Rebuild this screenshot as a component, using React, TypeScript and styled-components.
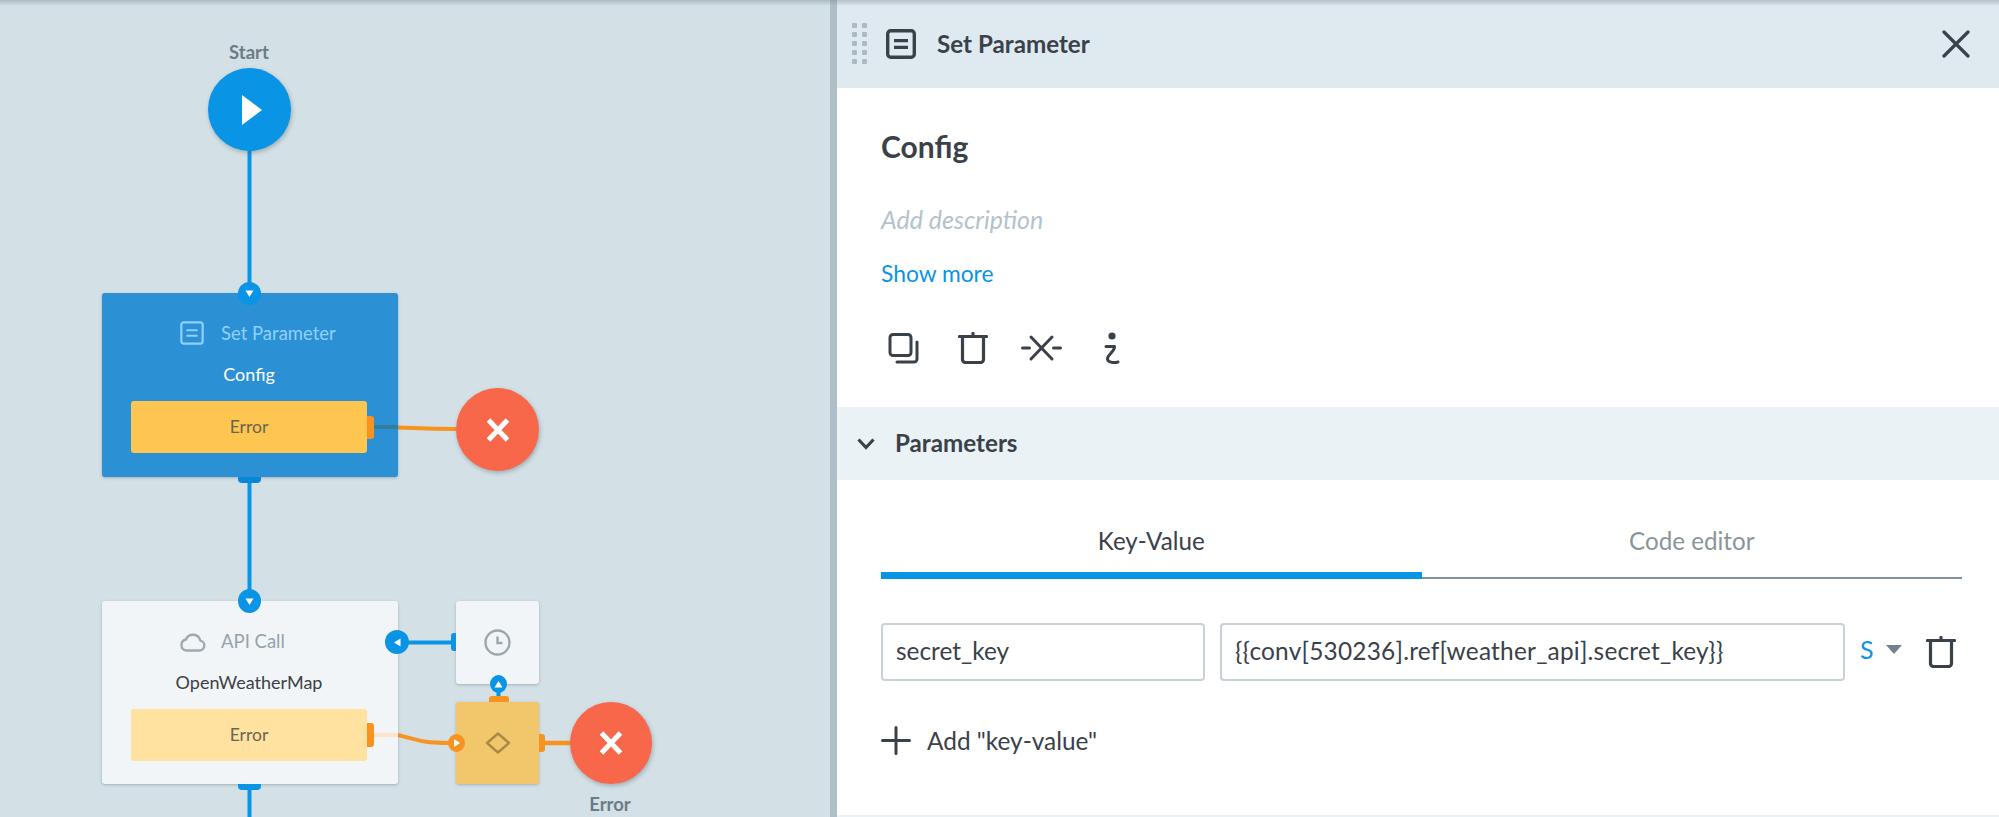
import React from "react";
import styled, { createGlobalStyle } from "styled-components";

const Global = createGlobalStyle`
  html, body { margin: 0; padding: 0; width: 1999px; height: 817px; overflow: hidden; background: #d3e0e6; }
  #root { width: 1999px; height: 817px; }
  * { box-sizing: border-box; }
`;

const FONT = `"Lato", "Open Sans", "Liberation Sans", sans-serif`;

const Page = styled.div`
  position: relative;
  display: flex;
  width: 1999px;
  height: 817px;
  font-family: ${FONT};
  overflow: hidden;
  &::after {
    content: "";
    position: absolute;
    left: 0;
    right: 0;
    top: 0;
    height: 6px;
    background: linear-gradient(rgba(120, 135, 145, 0.42), rgba(120, 135, 145, 0));
    pointer-events: none;
  }
`;

/* ---------- canvas ---------- */
const Canvas = styled.div`
  position: relative;
  flex: 0 0 830px;
  background: #d3e0e6;
`;
const Wires = styled.svg`
  position: absolute;
  left: 0;
  top: 0;
`;
const WiresOver = styled(Wires)`
  z-index: 1;
`;
const Place = styled.div<{ $x: number; $y: number; $w: number; $h: number }>`
  position: absolute;
  left: ${(p) => p.$x}px;
  top: ${(p) => p.$y}px;
  width: ${(p) => p.$w}px;
  height: ${(p) => p.$h}px;
`;
const Circle = styled(Place)<{ $bg: string }>`
  border-radius: 50%;
  background: ${(p) => p.$bg};
  box-shadow: 1px 2px 4px rgba(60, 80, 90, 0.35);
  display: flex;
  align-items: center;
  justify-content: center;
  z-index: 2;
`;
const PlayGlyph = styled.svg`
  margin-left: 5px;
`;
const Port = styled(Place)<{ $bg: string }>`
  border-radius: 50%;
  background: ${(p) => p.$bg};
  display: flex;
  align-items: center;
  justify-content: center;
  z-index: 2;
`;
const Tab = styled(Place)<{ $bg: string; $r: string }>`
  background: ${(p) => p.$bg};
  border-radius: ${(p) => p.$r};
  z-index: 2;
`;
const CanvasLabel = styled.div<{ $cx: number; $cy: number }>`
  position: absolute;
  left: ${(p) => p.$cx - 60}px;
  top: ${(p) => p.$cy - 12}px;
  width: 120px;
  height: 24px;
  line-height: 24px;
  text-align: center;
  font-size: 18.5px;
  font-weight: 700;
  color: #6b7c85;
`;
const Node = styled(Place)<{ $bg: string }>`
  background: ${(p) => p.$bg};
  border-radius: 3px;
  box-shadow: 0 1px 3px rgba(70, 90, 100, 0.35);
  padding: 27px 31px 0 29px;
  display: flex;
  flex-direction: column;
  align-items: stretch;
`;
const NodeHead = styled.div<{ $color: string }>`
  display: flex;
  align-items: center;
  gap: 14px;
  height: 26px;
  padding-left: 46px;
  font-size: 18.5px;
  color: ${(p) => p.$color};
`;
const HeadIcon = styled.div`
  width: 30px;
  display: flex;
  justify-content: center;
`;
const NodeName = styled.div<{ $color: string }>`
  margin-top: 15px;
  height: 26px;
  line-height: 26px;
  text-align: center;
  font-size: 18px;
  color: ${(p) => p.$color};
`;
const ErrorBar = styled.div<{ $bg: string }>`
  margin-top: 14px;
  height: 52px;
  border-radius: 3px;
  background: ${(p) => p.$bg};
  display: flex;
  align-items: center;
  justify-content: center;
  padding-bottom: 2px;
  font-size: 17.5px;
  color: #6a6452;
`;
const SmallBox = styled(Place)<{ $bg: string }>`
  background: ${(p) => p.$bg};
  border-radius: 3px;
  box-shadow: 0 1px 3px rgba(70, 90, 100, 0.35);
  display: flex;
  align-items: center;
  justify-content: center;
`;

/* ---------- divider ---------- */
const Divider = styled.div`
  flex: 0 0 7px;
  background: #aebfc8;
`;

/* ---------- panel ---------- */
const Panel = styled.div`
  flex: 1;
  display: flex;
  flex-direction: column;
  background: #fff;
  color: #3a4149;
`;
const Header = styled.div`
  height: 88px;
  flex: none;
  background: #dfe9f0;
  display: flex;
  align-items: center;
  padding: 0 29px 0 15px;
`;
const Grip = styled.div`
  display: grid;
  grid-template-columns: 5px 5px;
  grid-auto-rows: 5px;
  column-gap: 5px;
  row-gap: 4px;
  margin-top: -1px;
  margin-right: 19px;
  i {
    background: #adbac2;
    border-radius: 1px;
  }
`;
const HeaderTitle = styled.div`
  margin-left: 21px;
  margin-top: -2px;
  font-size: 24.2px;
  font-weight: 700;
  flex: 1;
`;
const Body = styled.div`
  flex: none;
  height: 319px;
  padding: 37px 44px 0;
  display: flex;
  flex-direction: column;
`;
const Name = styled.div`
  height: 42px;
  line-height: 42px;
  font-size: 30px;
  font-weight: 700;
`;
const Desc = styled.div`
  margin-top: 37px;
  height: 30px;
  line-height: 30px;
  font-size: 25px;
  font-style: italic;
  color: #b4c2ca;
`;
const More = styled.div`
  margin-top: 24px;
  height: 30px;
  line-height: 30px;
  font-size: 22.8px;
  color: #0a94e5;
`;
const Actions = styled.div`
  margin-top: 42px;
  display: flex;
  align-items: center;
  height: 36px;
  padding-left: 7px;
`;
const ActionSlot = styled.div<{ $w: number }>`
  width: ${(p) => p.$w}px;
  display: flex;
`;
const SectionHead = styled.div`
  height: 73px;
  flex: none;
  background: #ebf2f6;
  display: flex;
  align-items: center;
  padding-left: 20px;
  gap: 20px;
  font-size: 24.2px;
  font-weight: 700;
`;
const ParamsLabel = styled.span`
  margin-top: -3px;
`;
const Section = styled.div`
  flex: 1;
  padding: 37px 37px 0 44px;
  border-bottom: 2px solid #ebf2f6;
`;
const Tabs = styled.div`
  display: flex;
  height: 62px;
  border-bottom: 2px solid #7f919b;
`;
const TabItem = styled.div<{ $active?: boolean }>`
  flex: 1;
  height: 62px;
  padding-bottom: 9px;
  display: flex;
  align-items: center;
  justify-content: center;
  font-size: 24.2px;
  color: ${(p) => (p.$active ? "#3a4149" : "#8a9499")};
  border-bottom: ${(p) => (p.$active ? "7px solid #0a94e5" : "none")};
`;
const InactiveLabel = styled.span`
  margin-top: -6px;
`;
const Row = styled.div`
  margin-top: 44px;
  display: flex;
  align-items: center;
`;
const Field = styled.div<{ $w: number; $spread?: boolean }>`
  flex: 0 0 ${(p) => p.$w}px;
  height: 58px;
  border: 2px solid #c7d1d6;
  border-radius: 4px;
  display: flex;
  align-items: center;
  padding: 0 0 3px 13px;
  font-size: 24.4px;
  letter-spacing: ${(p) => (p.$spread ? "0.23px" : "0")};
  color: #3a4149;
  margin-right: 15px;
  white-space: nowrap;
`;
const TypeS = styled.div`
  font-size: 25px;
  color: #0a94e5;
  width: 26px;
  margin-top: -7px;
`;
const Caret = styled.div`
  width: 0;
  height: 0;
  border-left: 8px solid transparent;
  border-right: 8px solid transparent;
  border-top: 9px solid #6f828d;
  margin-top: -6px;
  margin-right: 24px;
`;
const AddRow = styled.div`
  margin-top: 45px;
  display: flex;
  align-items: center;
  gap: 16px;
  font-size: 24.4px;
`;

const Dots = ({ n }: { n: number }) => (
  <>{Array.from({ length: n }, (_, i) => <i key={i} />)}</>
);

const Sheet = ({ size = 30, color = "#3a4149", sw = 3.4 }: { size?: number; color?: string; sw?: number }) => (
  <svg width={size} height={size} viewBox="0 0 30 30" fill="none" stroke={color} strokeWidth={sw}>
    <rect x="1.7" y="1.7" width="26.6" height="26.6" rx="3" />
    <path d="M8 11.6h14M8 18.4h14" strokeWidth={sw * 0.9} />
  </svg>
);

const Trash = () => (
  <svg width="30" height="32" viewBox="0 0 30 32" fill="none" stroke="#3a4149" strokeWidth="3.2" strokeLinecap="round">
    <path d="M1.5 4.5h27M15 1.500v3M4.500 4.500v23a3 3 0 0 0 3 3h15a3 3 0 0 0 3-3v-23" />
  </svg>
);

const Copy = () => (
  <svg width="31" height="31" viewBox="0 0 31 31" fill="none" stroke="#3a4149" strokeWidth="3">
    <rect x="2" y="1.5" width="21" height="21" rx="3" />
    <path d="M29 9v17a3 3 0 0 1-3 3H9" strokeLinecap="round" />
  </svg>
);

const Disconnect = () => (
  <svg width="41" height="28" viewBox="0 0 41 28" fill="none" stroke="#3a4149" strokeWidth="3" strokeLinecap="round">
    <path d="M1.5 14h7M32.500 14h7M10 3l21 22M31 3L10 25" />
  </svg>
);

const Info = () => (
  <svg width="16" height="33" viewBox="0 0 16 33" fill="none" stroke="#3a4149" strokeWidth="3" strokeLinecap="round" strokeLinejoin="round">
    <circle cx="8" cy="4" r="3.600" fill="#3a4149" stroke="none" />
    <path d="M2 14.500h8.500c.8 4-6.500 8-7 12-.4 3.500 6 5 10.500 3.500" />
  </svg>
);

const Close = () => (
  <svg width="28" height="28" viewBox="0 0 28 28" fill="none" stroke="#3a4149" strokeWidth="3.2" strokeLinecap="round">
    <path d="M2 2l24 24M26 2L2 26" />
  </svg>
);

const Chevron = () => (
  <svg width="18" height="12" viewBox="0 0 18 12" fill="none" stroke="#3a4149" strokeWidth="3.2">
    <path d="M1.500 1.500L9 9.500l7.500-8" />
  </svg>
);

const Plus = () => (
  <svg width="30" height="29" viewBox="0 0 30 29" fill="none" stroke="#3a4149" strokeWidth="3" strokeLinecap="round">
    <path d="M15 1.500v26M1.500 14.500h27" />
  </svg>
);

const Cloud = () => (
  <svg width="27" height="21" viewBox="0 0 27 21" fill="none" stroke="#9fabb3" strokeWidth="2.400">
    <path d="M7 19.500h13.500a5 5 0 0 0 .8-9.900A7.500 7.500 0 0 0 7 8.500a5.600 5.600 0 0 0 0 11z" strokeLinejoin="round" />
  </svg>
);

const Clock = () => (
  <svg width="27" height="27" viewBox="0 0 27 27" fill="none" stroke="#9aa7af" strokeWidth="2.400">
    <circle cx="13.500" cy="13.500" r="12" />
    <path d="M13.500 7.500v6.500h5" />
  </svg>
);

const Diamond = () => (
  <svg width="26" height="22" viewBox="0 0 26 22" fill="none" stroke="#a98a45" strokeWidth="2.400">
    <path d="M13 1.500L24 11 13 20.500 2 11z" strokeLinejoin="round" />
  </svg>
);

const Cross = () => (
  <svg width="24" height="24" viewBox="0 0 24 24" fill="none" stroke="#fff" strokeWidth="5">
    <path d="M2.500 2l19 20M21.500 2l-19 20" />
  </svg>
);

const Tri = ({ rot = 0, color = "#fff" }: { rot?: number; color?: string }) => (
  <svg width="9" height="9" viewBox="0 0 9 9" fill={color} transform={`rotate(${rot})`}>
    <path d="M0.500 1.500h8L4.500 8z" />
  </svg>
);

export default function App() {
  return (
    <Page>
      <Global />
      <Canvas>
        <Wires width="830" height="817" viewBox="0 0 830 817" fill="none">
          <path d="M249.500 151V293M249.500 477V601M249.500 784V817M397 642.500H456M498.500 675V700" stroke="#0a94e5" strokeWidth="4" />
          <path d="M398 427.500C425 428.500 430 429 456 429" stroke="#f7931e" strokeWidth="4" />
          <path d="M398 735C420 741 425 743 450 743" stroke="#f7931e" strokeWidth="4" />
          <path d="M545 743H570" stroke="#f7931e" strokeWidth="4.500" />
        </Wires>

        <CanvasLabel $cx={249} $cy={52}>Start</CanvasLabel>
        <Circle $x={208} $y={68} $w={83} $h={83} $bg="#0a94e5">
          <PlayGlyph width="22" height="30" viewBox="0 0 22 30" fill="#fff"><path d="M1 0l20 15L1 30z" /></PlayGlyph>
        </Circle>

        <Node $x={102} $y={293} $w={296} $h={184} $bg="#2b90d4">
          <NodeHead $color="#8fd0fb">
            <HeadIcon><Sheet size={24} color="#8fd0fb" sw={2.800} /></HeadIcon>
            <span>Set Parameter</span>
          </NodeHead>
          <NodeName $color="#fff">Config</NodeName>
          <ErrorBar $bg="#fec550">Error</ErrorBar>
        </Node>
        <Port $x={238} $y={282} $w={23} $h={23} $bg="#0a94e5"><Tri /></Port>
        <Tab $x={367} $y={416} $w={7} $h={23} $bg="#f7931e" $r="0 3px 3px 0" />
        <Tab $x={238} $y={477} $w={23} $h={6} $bg="#0a85d8" $r="0 0 4px 4px" />
        <Circle $x={456} $y={388} $w={83} $h={83} $bg="#f9674a"><Cross /></Circle>

        <Node $x={102} $y={601} $w={296} $h={183} $bg="#f2f5f7">
          <NodeHead $color="#95a3ac">
            <HeadIcon><Cloud /></HeadIcon>
            <span>API Call</span>
          </NodeHead>
          <NodeName $color="#3a4149">OpenWeatherMap</NodeName>
          <ErrorBar $bg="#ffe2a0">Error</ErrorBar>
        </Node>
        <WiresOver width="830" height="817" viewBox="0 0 830 817" fill="none">
          <path d="M374 427H398" stroke="#2f7ea0" strokeWidth="4" />
          <path d="M374 735H398" stroke="#fbe3cc" strokeWidth="4" />
        </WiresOver>
        <Port $x={238} $y={589} $w={23} $h={24} $bg="#0a94e5"><Tri /></Port>
        <Tab $x={367} $y={723} $w={7} $h={24} $bg="#f7931e" $r="0 3px 3px 0" />
        <Tab $x={238} $y={784} $w={23} $h={6} $bg="#0a94e5" $r="0 0 4px 4px" />
        <Port $x={385} $y={630} $w={24} $h={24} $bg="#0a94e5"><Tri rot={90} /></Port>

        <SmallBox $x={456} $y={601} $w={83} $h={83} $bg="#f2f5f7"><Clock /></SmallBox>
        <Tab $x={451} $y={633} $w={5} $h={18} $bg="#0a94e5" $r="3px 0 0 3px" />
        <Port $x={490} $y={675} $w={17} $h={18} $bg="#0a94e5"><Tri rot={180} /></Port>
        <SmallBox $x={456} $y={702} $w={83} $h={82} $bg="#f2c76c"><Diamond /></SmallBox>
        <Tab $x={489} $y={696} $w={20} $h={6} $bg="#f7931e" $r="3px 3px 0 0" />
        <Tab $x={539} $y={734} $w={6} $h={18} $bg="#f7931e" $r="0 3px 3px 0" />
        <Port $x={448} $y={734} $w={17} $h={18} $bg="#f7931e">
          <svg width="6" height="8" viewBox="0 0 6 8" fill="#fff"><path d="M0 0l6 4-6 4z" /></svg>
        </Port>
        <Circle $x={570} $y={702} $w={82} $h={82} $bg="#f9674a"><Cross /></Circle>
        <CanvasLabel $cx={610} $cy={804}>Error</CanvasLabel>
      </Canvas>

      <Divider />

      <Panel>
        <Header>
          <Grip><Dots n={10} /></Grip>
          <Sheet />
          <HeaderTitle>Set Parameter</HeaderTitle>
          <Close />
        </Header>
        <Body>
          <Name>Config</Name>
          <Desc>Add description</Desc>
          <More>Show more</More>
          <Actions>
            <ActionSlot $w={70}><Copy /></ActionSlot>
            <ActionSlot $w={63}><Trash /></ActionSlot>
            <ActionSlot $w={83}><Disconnect /></ActionSlot>
            <ActionSlot $w={16}><Info /></ActionSlot>
          </Actions>
        </Body>
        <SectionHead>
          <Chevron />
          <ParamsLabel>Parameters</ParamsLabel>
        </SectionHead>
        <Section>
          <Tabs>
            <TabItem $active>Key-Value</TabItem>
            <TabItem><InactiveLabel>Code editor</InactiveLabel></TabItem>
          </Tabs>
          <Row>
            <Field $w={324}>secret_key</Field>
            <Field $w={625} $spread>{"{{conv[530236].ref[weather_api].secret_key}}"}</Field>
            <TypeS>S</TypeS>
            <Caret />
            <Trash />
          </Row>
          <AddRow>
            <Plus />
            <span>Add "key-value"</span>
          </AddRow>
        </Section>
      </Panel>
    </Page>
  );
}
